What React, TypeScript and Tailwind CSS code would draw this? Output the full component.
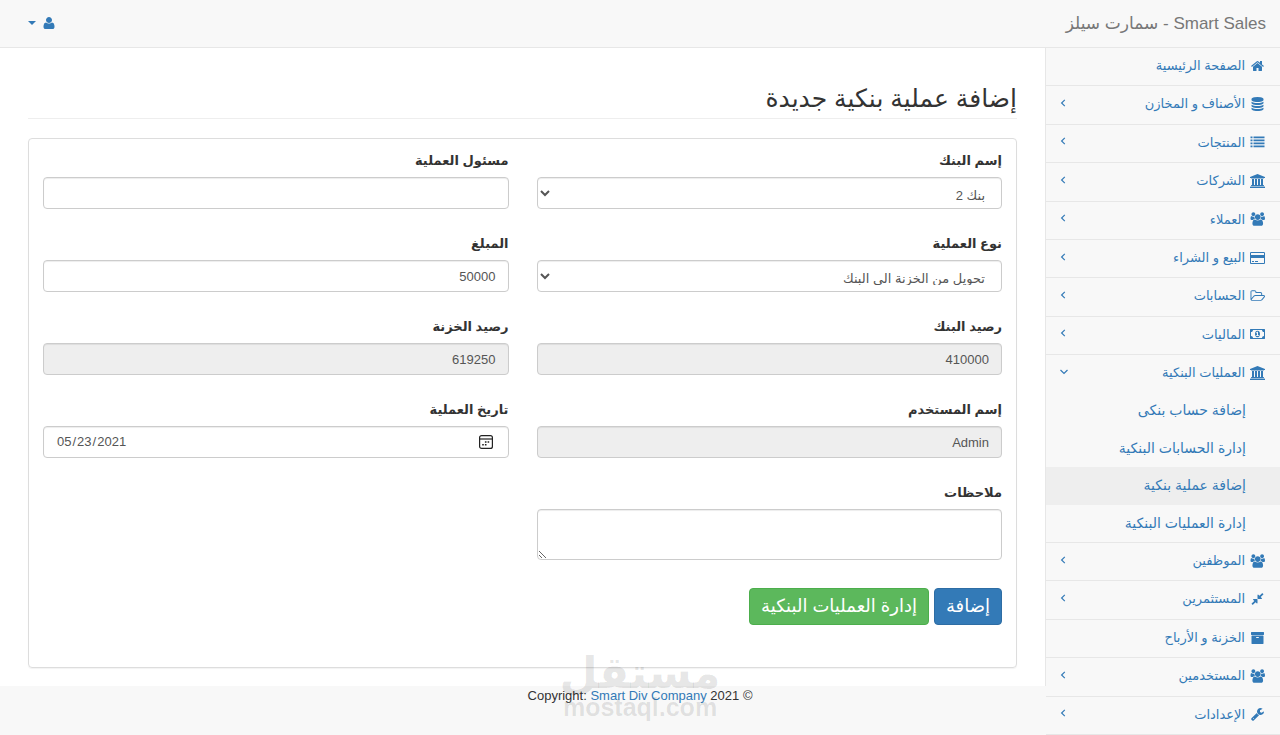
import React, { useState } from "react";

type IconProps = { path: string; width?: number; className?: string };

const Icon: React.FC<IconProps> = ({ path, width = 1792, className = "h-[14px] w-[15px]" }) => (
  <svg viewBox={`0 0 ${width} 1792`} fill="currentColor" aria-hidden="true" className={`shrink-0 ${className}`}>
    <path d={path} />
  </svg>
);

const icons = {
  home: { path: "M1472 992v480q0 26-19 45t-45 19h-384v-384h-256v384h-384q-26 0-45-19t-19-45v-480q0-1 .5-3t.5-3l575-474 575 474q1 2 1 6zm223-69l-62 74q-8 9-21 11h-3q-13 0-21-7l-692-577-692 577q-12 8-24 7-13-2-21-11l-62-74q-8-10-7-23.5t11-21.5l719-599q32-26 76-26t76 26l244 204v-195q0-14 9-23t23-9h192q14 0 23 9t9 23v408l219 182q10 8 11 21.5t-7 23.5z" },
  database: { path: "M896 768q237 0 443-43t325-127v170q0 69-103 128t-280 93.5-385 34.5-385-34.5-280-93.5-103-128v-170q119 84 325 127t443 43zm0 768q237 0 443-43t325-127v170q0 69-103 128t-280 93.5-385 34.5-385-34.5-280-93.5-103-128v-170q119 84 325 127t443 43zm0-384q237 0 443-43t325-127v170q0 69-103 128t-280 93.5-385 34.5-385-34.5-280-93.5-103-128v-170q119 84 325 127t443 43zm0-1152q208 0 385 34.5t280 93.5 103 128v128q0 69-103 128t-280 93.5-385 34.5-385-34.5-280-93.5-103-128v-128q0-69 103-128t280-93.5 385-34.5z" },
  list: { path: "M0 192h256v224H0zM384 192h1408v224H384zM0 576h256v224H0zM384 576h1408v224H384zM0 960h256v224H0zM384 960h1408v224H384zM0 1344h256v224H0zM384 1344h1408v224H384z" },
  university: { width: 1920, path: "M960 0l960 384v128h-128q0 26-20.5 45t-48.5 19h-1526q-28 0-48.5-19t-20.5-45h-128v-128zm-704 640h256v768h128v-768h256v768h128v-768h256v768h128v-768h256v768h59q28 0 48.5 19t20.5 45v64h-1664v-64q0-26 20.5-45t48.5-19h59v-768zm1595 960q28 0 48.5 19t20.5 45v128h-1920v-128q0-26 20.5-45t48.5-19h1782z" },
  users: { width: 1984, path: "M657 896q-162 5-265 128h-134q-82 0-138-40.5t-56-118.5q0-353 124-353 6 0 43.5 21t97.5 42.5 119 21.5q67 0 133-23-5 37-5 66 0 139 81 256zm1071 637q0 120-73 189.5t-194 69.5h-874q-121 0-194-69.5t-73-189.5q0-53 3.5-103.5t14-109 26.5-108.5 43-97.5 62-81 85.5-53.5 111.5-20q10 0 43 21.5t73 48 107 48 135 21.5 135-21.5 107-48 73-48 43-21.5q61 0 111.5 20t85.5 53.5 62 81 43 97.5 26.5 108.5 14 109 3.5 103.5zm-1024-1277q0 106-75 181t-181 75-181-75-75-181 75-181 181-75 181 75 75 181zm704 384q0 159-112.5 271.5t-271.5 112.5-271.5-112.5-112.5-271.5 112.5-271.5 271.5-112.5 271.5 112.5 112.5 271.5zm576 225q0 78-56 118.5t-138 40.5h-134q-103-123-265-128 81-117 81-256 0-29-5-66 66 23 133 23 59 0 119-21.5t97.5-42.5 43.5-21q124 0 124 353zm-128-609q0 106-75 181t-181 75-181-75-75-181 75-181 181-75 181 75 75 181z" },
  card: { width: 1920, path: "M1760 128q66 0 113 47t47 113v1216q0 66-47 113t-113 47h-1600q-66 0-113-47t-47-113v-1216q0-66 47-113t113-47h1600zm-1600 128q-13 0-22.5 9.5t-9.5 22.5v224h1664v-224q0-13-9.5-22.5t-22.5-9.5h-1600zm1600 1280q13 0 22.5-9.5t9.5-22.5v-608h-1664v608q0 13 9.5 22.5t22.5 9.5h1600zm-1504-128v-128h256v128h-256zm384 0v-128h384v128h-384z" },
  folder: { width: 1973, path: "M1845 931q0-35-53-35h-1088q-40 0-85.5 21.5t-71.5 52.5l-294 363q-18 24-18 40 0 35 53 35h1088q40 0 86-22t71-53l294-363q18-22 18-39zm-1141-163h768v-160q0-40-28-68t-68-28h-576q-40 0-68-28t-28-68v-64q0-40-28-68t-68-28h-320q-40 0-68 28t-28 68v853l256-315q44-53 116-87.5t140-34.5zm1269 163q0 62-46 120l-295 363q-43 53-116 87.5t-140 34.5h-1088q-92 0-158-66t-66-158v-960q0-92 66-158t158-66h320q92 0 158 66t66 158v32h544q92 0 158 66t66 158v160h192q54 0 99 24.5t67 70.5q15 32 15 68z" },
  money: { width: 1920, path: "M768 1152h384v-96h-128v-448h-114l-148 137 77 80q42-37 55-57h2v288h-128v96zm512-256q0 70-21 142t-59.5 134-101.5 101-138 39-138-39-101.5-101-59.5-134-21-142 21-142 59.5-134 101.5-101 138-39 138 39 101.5 101 59.5 134 21 142zm512 256v-512q-106 0-181-75t-75-181h-1152q0 106-75 181t-181 75v512q106 0 181 75t75 181h1152q0-106 75-181t181-75zm128-832v1152q0 26-19 45t-45 19h-1792q-26 0-45-19t-19-45v-1152q0-26 19-45t45-19h1792q26 0 45 19t19 45z" },
  compress: { path: "M896 960v448q0 26-19 45t-45 19-45-19l-144-144-332 332q-10 10-23 10t-23-10l-114-114q-10-10-10-23t10-23l332-332-144-144q-19-19-19-45t19-45 45-19h448q26 0 45 19t19 45zm755-672q0 13-10 23l-332 332 144 144q19 19 19 45t-19 45-45 19h-448q-26 0-45-19t-19-45v-448q0-26 19-45t45-19 45 19l144 144 332-332q10-10 23-10t23 10l114 114q10 10 10 23z" },
  archive: { path: "M1088 832q0-26-19-45t-45-19h-256q-26 0-45 19t-19 45 19 45 45 19h256q26 0 45-19t19-45zm576-192v960q0 26-19 45t-45 19h-1408q-26 0-45-19t-19-45v-960q0-26 19-45t45-19h1408q26 0 45 19t19 45zm64-448v256q0 26-19 45t-45 19h-1536q-26 0-45-19t-19-45v-256q0-26 19-45t45-19h1536q26 0 45 19t19 45z" },
  wrench: { path: "M448 1472q0-26-19-45t-45-19-45 19-19 45 19 45 45 19 45-19 19-45zm644-420l-682 682q-37 37-90 37-52 0-91-37l-106-108q-38-36-38-90 0-53 38-91l681-681q39 98 114.5 173.5t173.5 114.5zm634-435q0 39-23 106-47 134-164.5 217.5t-258.5 83.5q-185 0-316.5-131.5t-131.5-316.5 131.5-316.5 316.5-131.5q58 0 121.5 16.5t107.5 46.5q16 11 16 28t-16 28l-293 169v224l193 107q5-3 79-48.5t135.5-81 70.5-35.5q15 0 23.5 10t8.5 25z" },
  user: { path: "M1600 1405q0 120-73 189.5t-194 69.5h-874q-121 0-194-69.5t-73-189.5q0-53 3.5-103.5t14-109 26.5-108.5 43-97.5 62-81 85.5-53.5 111.5-20q9 0 42 21.5t74.5 48 108 48 133.5 21.5 133.5-21.5 108-48 74.5-48 42-21.5q61 0 111.5 20t85.5 53.5 62 81 43 97.5 26.5 108.5 14 109 3.5 103.5zm-320-893q0 159-112.5 271.5t-271.5 112.5-271.5-112.5-112.5-271.5 112.5-271.5 271.5-112.5 271.5 112.5 112.5 271.5z" },
};

type MenuItem = {
  label: string;
  icon: { path: string; width?: number };
  arrow?: boolean;
  children?: string[];
};

const menu: MenuItem[] = [
  { label: "الصفحة الرئيسية", icon: icons.home },
  { label: "الأصناف و المخازن", icon: icons.database, arrow: true },
  { label: "المنتجات", icon: icons.list, arrow: true },
  { label: "الشركات", icon: icons.university, arrow: true },
  { label: "العملاء", icon: icons.users, arrow: true },
  { label: "البيع و الشراء", icon: icons.card, arrow: true },
  { label: "الحسابات", icon: icons.folder, arrow: true },
  { label: "الماليات", icon: icons.money, arrow: true },
  {
    label: "العمليات البنكية",
    icon: icons.university,
    arrow: true,
    children: ["إضافة حساب بنكى", "إدارة الحسابات البنكية", "إضافة عملية بنكية", "إدارة العمليات البنكية"],
  },
  { label: "الموظفين", icon: icons.users, arrow: true },
  { label: "المستثمرين", icon: icons.compress, arrow: true },
  { label: "الخزنة و الأرباح", icon: icons.archive },
  { label: "المستخدمين", icon: icons.users, arrow: true },
  { label: "الإعدادات", icon: icons.wrench, arrow: true },
];

const activePage = "إضافة عملية بنكية";

const Angle: React.FC<{ open: boolean }> = ({ open }) => (
  <svg
    viewBox="0 0 10 10"
    fill="none"
    stroke="currentColor"
    strokeWidth="1.2"
    aria-hidden="true"
    className="mr-auto mb-[2px] size-[10px]"
  >
    <path d={open ? "M1.5 3L5 6.5 8.5 3" : "M5.8 1.8L2.6 5l3.2 3.2"} />
  </svg>
);

const Sidebar: React.FC = () => (
  <nav className="col-start-1 row-span-2 row-start-1 flex">
    <ul className="flex grow flex-col text-[13px] text-[#337ab7]">
      {menu.map((item) => (
        <li
          key={item.label}
          className={`flex flex-col border-b border-[#e7e7e7] ${item.children ? "grow-5" : "grow"}`}
        >
          <a href="#" className="flex min-h-[37px] grow items-center gap-[5px] pr-[15px] pb-[2px] pl-[13px]">
            <Icon {...item.icon} />
            {item.label}
            {item.arrow && <Angle open={!!item.children} />}
          </a>
          {item.children && (
            <ul className="flex grow-4 flex-col text-[14px]">
              {item.children.map((child) => (
                <li key={child} className="flex grow">
                  <a
                    href="#"
                    className={`flex min-h-[37px] grow items-center pr-[34px] ${child === activePage ? "bg-[#eee]" : ""}`}
                  >
                    {child}
                  </a>
                </li>
              ))}
            </ul>
          )}
        </li>
      ))}
    </ul>
  </nav>
);

const Field: React.FC<{ id: string; label: string; children: React.ReactNode }> = ({ id, label, children }) => (
  <div className="flex flex-col">
    <label htmlFor={id} className="mb-2 text-[13px] leading-4 font-bold">
      {label}
    </label>
    {children}
  </div>
);

const control =
  "h-8 w-full rounded border border-[#ccc] bg-white px-3 text-[13px] text-[#555] shadow-[inset_0_1px_1px_rgba(0,0,0,0.075)] outline-none read-only:bg-[#eee]";
const selectControl =
  "h-8 w-full rounded border border-[#ccc] bg-white px-3 pt-[9px] pb-[6px] text-[13px] text-[#555] shadow-[inset_0_1px_1px_rgba(0,0,0,0.075)] outline-none";

const App: React.FC = () => {
  const [amount, setAmount] = useState("50000");
  const [owner, setOwner] = useState("");
  const [date, setDate] = useState("2021-05-23");
  const [notes, setNotes] = useState("");

  return (
    <div
      dir="rtl"
      className="relative flex min-h-screen flex-col bg-[#f8f8f8] font-['Liberation_Sans','DejaVu_Sans',sans-serif] text-[#333]"
    >
      <header className="flex h-12 items-center justify-between border-b border-[#e7e7e7] px-[14px]">
        <a href="#" className="text-[17px] text-[#777]">
          Smart Sales - سمارت سيلز
        </a>
        <button type="button" aria-label="الحساب" className="mb-[2px] ml-[14px] flex items-center gap-[6px] text-[#337ab7]">
          <Icon {...icons.user} className="size-[14px]" />
          <svg viewBox="0 0 8 4" fill="currentColor" aria-hidden="true" className="h-1 w-2">
            <path d="M0 0h8L4 4z" />
          </svg>
        </button>
      </header>

      <div className="grid grow grid-cols-[234px_1fr] grid-rows-[auto_1fr]">
        <Sidebar />

        <main className="col-start-2 row-start-1 border-r border-[#e7e7e7] bg-white px-7 pt-[34px] pb-[18px]">
          <h1 className="mb-[19px] border-b border-[#eee] pb-1 text-[25px] leading-8">إضافة عملية بنكية جديدة</h1>

          <form
            onSubmit={(e) => e.preventDefault()}
            className="rounded border border-[#ddd] px-[14px] pt-[14px] pb-[42px] shadow-[0_1px_1px_rgba(0,0,0,0.05)]"
          >
            <div className="grid grid-cols-2 gap-x-7 gap-y-[27px]">
              <Field id="bank" label="إسم البنك">
                <select id="bank" className={selectControl}>
                  <option>بنك 2</option>
                </select>
              </Field>
              <Field id="owner" label="مسئول العملية">
                <input id="owner" value={owner} onChange={(e) => setOwner(e.target.value)} className={control} />
              </Field>
              <Field id="type" label="نوع العملية">
                <select id="type" className={selectControl}>
                  <option>تحويل من الخزنة الى البنك</option>
                </select>
              </Field>
              <Field id="amount" label="المبلغ">
                <input id="amount" value={amount} onChange={(e) => setAmount(e.target.value)} className={control} />
              </Field>
              <Field id="bank-balance" label="رصيد البنك">
                <input id="bank-balance" value="410000" readOnly className={control} />
              </Field>
              <Field id="safe-balance" label="رصيد الخزنة">
                <input id="safe-balance" value="619250" readOnly className={control} />
              </Field>
              <Field id="user" label="إسم المستخدم">
                <input id="user" value="Admin" readOnly className={control} />
              </Field>
              <Field id="date" label="تاريخ العملية">
                <div dir="ltr" className="relative">
                  <input
                    id="date"
                    type="date"
                    value={date}
                    onChange={(e) => setDate(e.target.value)}
                    className="h-8 w-full rounded border border-[#ccc] bg-white px-3 text-[13px] text-[#555] shadow-[inset_0_1px_1px_rgba(0,0,0,0.075)] outline-none [&::-webkit-calendar-picker-indicator]:opacity-0"
                  />
                  <svg
                    viewBox="0 0 14 14"
                    fill="none"
                    stroke="#222"
                    strokeWidth="1.2"
                    aria-hidden="true"
                    className="pointer-events-none absolute top-[9px] right-4 size-[14px]"
                  >
                    <rect x="0.6" y="0.6" width="12.8" height="12.8" rx="2" />
                    <path d="M.6 4h12.8" />
                    <path d="M5.9 7h1.6M8.6 7h1.6M3.2 9.8h1.6M5.9 9.8h1.6" strokeWidth="1.6" />
                  </svg>
                </div>
              </Field>
              <Field id="notes" label="ملاحظات">
                <textarea
                  id="notes"
                  value={notes}
                  onChange={(e) => setNotes(e.target.value)}
                  className="h-[51px] w-full rounded border border-[#ccc] bg-white px-3 py-[6px] text-[13px] text-[#555] shadow-[inset_0_1px_1px_rgba(0,0,0,0.075)] outline-none"
                />
              </Field>
            </div>

            <div className="mt-7 flex gap-[5px] text-[18px] text-white">
              <button type="submit" className="h-[37px] rounded border border-[#2e6da4] bg-[#337ab7] px-[11px]">
                إضافة
              </button>
              <button type="button" className="h-[37px] rounded border border-[#4cae4c] bg-[#5cb85c] px-[11px]">
                إدارة العمليات البنكية
              </button>
            </div>
          </form>
        </main>

        <footer className="pointer-events-none col-span-2 col-start-1 row-start-2 text-center text-[13px] leading-5">
          <p dir="ltr">
            Copyright:{" "}
            <a href="#" className="pointer-events-auto text-[#337ab7]">
              Smart Div Company
            </a>{" "}
            2021 ©
          </p>
        </footer>
      </div>

      <div className="pointer-events-none absolute inset-x-0 bottom-4 flex flex-col items-center font-bold text-black/10">
        <span className="text-[44px] leading-[44px]">مستقل</span>
        <span dir="ltr" className="text-[25px] leading-6">
          mostaql.com
        </span>
      </div>
    </div>
  );
};

export default App;
